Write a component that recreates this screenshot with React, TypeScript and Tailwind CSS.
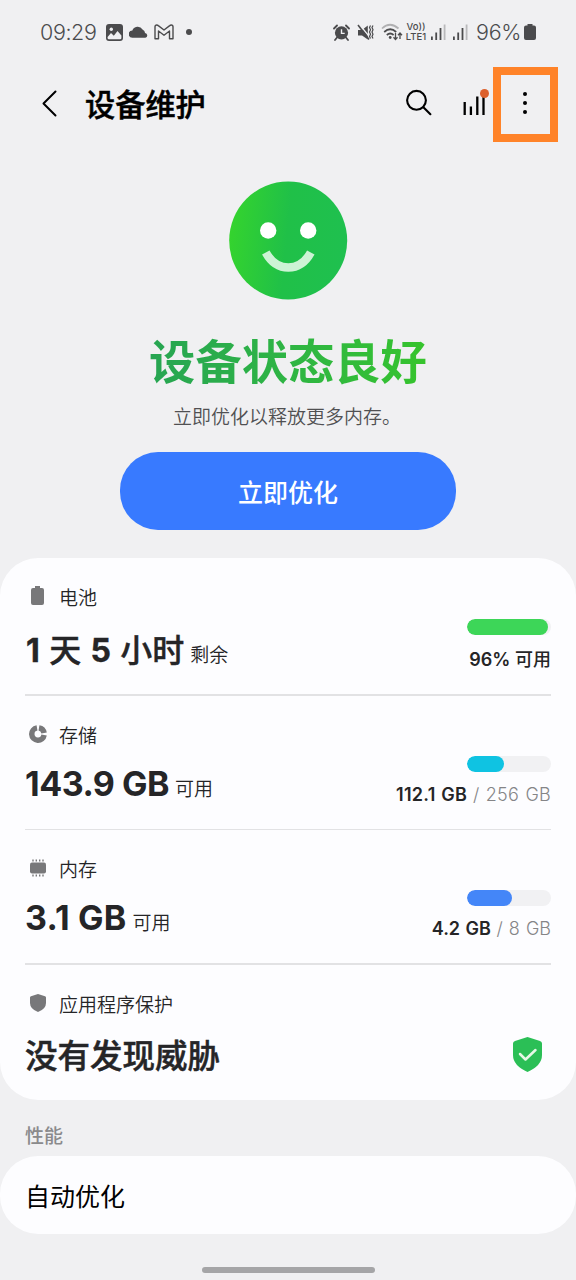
import type { ReactNode } from "react";

interface SectionProps {
  icon: ReactNode;
  label: string;
  value: ReactNode;
  valueClass?: string;
  suffix?: string;
  className: string;
  children?: ReactNode;
}

function SignalIcon() {
  return (
    <svg className="h-4 w-[15px]" viewBox="0 0 15 16" fill="#4b4b4d">
      <rect x="0" y="12.5" width="1.8" height="3.5" />
      <rect x="4.3" y="8.5" width="1.8" height="7.5" />
      <rect x="8.6" y="4" width="1.8" height="12" />
      <rect x="12.7" y="0.5" width="1.8" height="15.5" fill="#b9b9bb" />
    </svg>
  );
}

function StatusBar() {
  return (
    <div className="flex h-16 items-center pl-[40px] pr-[40px] text-[#4b4b4d]">
      <span className="w-[57px] whitespace-nowrap text-[21.5px] font-[350] leading-6 tracking-[-0.4px]">
        09:29
      </span>
      <svg className="ml-[9px] h-[17px] w-[17px]" viewBox="0 0 17 17">
        <rect width="17" height="17" rx="3" fill="#4b4b4d" />
        <path d="M1.600 13 5 9l2.800 2.700L11.500 7l3.900 4.600V14q0 1.300-1.400 1.300H3q-1.400 0-1.400-1.300Z" fill="#f0f0f2" />
        <circle cx="5.3" cy="5.2" r="1.7" fill="#f0f0f2" />
      </svg>
      <svg className="ml-[6px] h-3 w-[19px]" viewBox="0 0 18 12" fill="#4b4b4d" preserveAspectRatio="none">
        <path d="M3.500 11.700a3.600 3.600 0 0 1-.3-7.200A5.200 5.200 0 0 1 12.800 3.400 4 4 0 0 1 15.200 7a2.400 2.400 0 0 1 .300 4.700Z" />
      </svg>
      <svg className="ml-[6px] h-4 w-5" viewBox="0 0 20 16" fill="none" stroke="#4b4b4d" strokeWidth="1.4" strokeLinejoin="round">
        <path d="M1 2.800Q1 1 2.800 1q.8 0 1.500.6L10 6l5.700-4.400Q16.400 1 17.200 1 19 1 19 2.800V14.800H15.500V7L10 11.200 4.500 7v7.800H1Z" />
      </svg>
      <span className="ml-[12px] h-[6px] w-[6px] rounded-full bg-[#4b4b4d]" />

      <div className="ml-auto flex items-center">
        {/* alarm */}
        <svg className="h-[17px] w-[17px]" viewBox="0 0 17 17">
          <circle cx="8.5" cy="8.8" r="6.6" fill="#4b4b4d" />
          <path d="m1 4.500 3-3M16 4.500l-3-3M4 13.500l-2 2.500M13 13.500l2 2.500" stroke="#4b4b4d" strokeWidth="1.8" fill="none" strokeLinecap="round" />
          <path d="M8.500 5.200v4.200h3.200" stroke="#f0f0f2" strokeWidth="1.4" fill="none" />
        </svg>
        {/* vibrate / mute */}
        <svg className="ml-[7px] h-[17px] w-[17px]" viewBox="0 0 17 17">
          <path d="M1 6h4l5.800-4.500v14L5 11.500H1Z" fill="#4b4b4d" />
          <path d="M2.500.5 13 13.500" stroke="#f0f0f2" strokeWidth="1.2" />
          <path d="m1 1 11 14.500" stroke="#4b4b4d" strokeWidth="1.6" />
          <path d="m13.500 1.500-1 2 1 2.200-1 2.300 1 2.200-1 2.300 1 2M16 1.500l-1 2 1 2.200L15 8l1 2.200-1 2.300 1 2" stroke="#4b4b4d" strokeWidth="1.2" fill="none" />
        </svg>
        {/* wifi */}
        <svg className="ml-[7px] h-[18px] w-[22px]" viewBox="0 0 22 18" fill="none">
          <path d="M1 5.500q8-7.500 16.500 0" stroke="#b0b0b2" strokeWidth="1.7" />
          <path d="M3.200 9q6-5.500 12 0" stroke="#4b4b4d" strokeWidth="1.7" />
          <path d="M5.800 12q3.400-3 6.800 0" stroke="#4b4b4d" strokeWidth="1.7" />
          <circle cx="9.2" cy="14.5" r="1.4" fill="#4b4b4d" />
          <path d="M14.500 10v6.500m-2-2.200 2 2.300 2-2.300M19 16v-6m-2 2.200L19 10l2 2.200" stroke="#4b4b4d" strokeWidth="1.3" />
        </svg>
        <div className="ml-[2px] flex w-[22px] flex-col items-center whitespace-nowrap text-[9.5px] font-medium leading-[10px]">
          <span>Vo))</span>
          <span>LTE1</span>
        </div>
        <div className="ml-[4px] flex gap-[7px]">
          <SignalIcon />
          <SignalIcon />
        </div>
        <span className="ml-[8px] w-[46px] whitespace-nowrap text-[21.5px] font-[350] leading-6 tracking-[-0.3px]">
          96%
        </span>
        <svg className="ml-[2px] h-4 w-3" viewBox="0 0 12 16" fill="#4b4b4d">
          <path d="M3.500 0h5v1.500H10q2 0 2 2V14q0 2-2 2H2q-2 0-2-2V3.500q0-2 2-2h1.500Z" />
        </svg>
      </div>
    </div>
  );
}

function Header() {
  return (
    <header className="flex h-[82px] items-start pl-[41px] pr-[18px] text-black">
      <svg className="mt-[26px] h-[27px] w-4" viewBox="0 0 16 27" fill="none" stroke="#000" strokeWidth="2" strokeLinecap="round" strokeLinejoin="round">
        <path d="M14.500 1.500 2.500 13.500l12 12" />
      </svg>
      <h1 className="ml-[28px] mt-[21px] text-[30.2px] font-medium leading-10 [-webkit-text-stroke:0.5px]">
        设备维护
      </h1>
      <svg className="ml-auto mt-[25px] h-[27px] w-[27px]" viewBox="0 0 27 27" fill="none" stroke="#000" strokeWidth="2.1" strokeLinecap="round">
        <circle cx="11.5" cy="11.3" r="9.4" />
        <path d="m18.400 18.200 7 7" />
      </svg>
      <div className="relative ml-[31px] mt-[31px]">
        <svg className="h-5 w-6" viewBox="0 0 24 20" stroke="#000" strokeWidth="2.3">
          <path d="M1.700 7v13M7.900 11.500V20M14.300 1.500V20M20.500 1v19" />
        </svg>
        <span className="absolute -top-[6px] left-[17px] h-[9px] w-[9px] rounded-full bg-[#dc602c]" />
      </div>
      <div className="ml-[6px] mt-[3px] flex h-[75px] w-[65px] flex-col items-center justify-center gap-[5px] border-8 border-[#ff8329] pb-[3px] pr-[1px]">
        <span className="h-1 w-1 rounded-full bg-black" />
        <span className="h-1 w-1 rounded-full bg-black" />
        <span className="h-1 w-1 rounded-full bg-black" />
      </div>
    </header>
  );
}

function Face() {
  return (
    <svg className="mt-[35px] h-[119px] w-[119px]" viewBox="0 0 119 119">
      <defs>
        <linearGradient id="face" x1="0" y1="0.3" x2="1" y2="0.4">
          <stop offset="0" stopColor="#35d42d" />
          <stop offset="0.5" stopColor="#20c048" />
          <stop offset="1" stopColor="#1fc04f" />
        </linearGradient>
      </defs>
      <circle cx="59.2" cy="59.5" r="59" fill="url(#face)" />
      <circle cx="39.2" cy="49.5" r="8.2" fill="#fff" />
      <circle cx="79.2" cy="49.5" r="8.2" fill="#fff" />
      <path d="M36.800 71.500q8.200 15 22.500 15t22.500-15" fill="none" stroke="#cdf3d5" strokeWidth="8.5" />
    </svg>
  );
}

function Section({ icon, label, value, valueClass = "", suffix, className, children }: SectionProps) {
  return (
    <section className={`flex justify-between ${className}`}>
      <div>
        <div className="flex h-6 items-start">
          <div className="flex h-[21px] w-[25px] items-center justify-center">{icon}</div>
          <span className="ml-[9px] mt-[1.5px] text-[19px] font-[350] leading-6 text-[#252527]">{label}</span>
        </div>
        <div className={`flex items-baseline gap-[6px] whitespace-nowrap leading-10 text-[#252527] ${valueClass}`}>
          <span>{value}</span>
          {suffix && (
            <span className="text-[19px] font-[350] tracking-normal text-[#252527] [-webkit-text-stroke:0]">
              {suffix}
            </span>
          )}
        </div>
      </div>
      {children}
    </section>
  );
}

interface UsageProps {
  percent: number;
  color: string;
  className?: string;
  children: ReactNode;
}

function Usage({ percent, color, className = "mt-[33px] gap-[11px]", children }: UsageProps) {
  return (
    <div className={`flex flex-col items-end ${className}`}>
      <div className="h-4 w-[84px] overflow-hidden rounded-full bg-[#f1f1f3]">
        <div className={`h-4 rounded-full ${color}`} style={{ width: `${percent}%` }} />
      </div>
      <div className="whitespace-nowrap text-[18px] font-semibold leading-6 text-[#252527]">
        {children}
      </div>
    </div>
  );
}

export default function App() {
  return (
    <div className="flex h-[1280px] w-[576px] flex-col overflow-hidden bg-[#f0f0f2] font-[Inter,'Noto_Sans_CJK_SC',sans-serif]">
      <StatusBar />
      <Header />

      <div className="flex h-[412px] flex-col items-center">
        <Face />
        <h2 className="mt-[32px] bg-linear-to-r from-[#27a552] to-[#36c42c] bg-clip-text text-[46.3px] font-bold leading-[60px] text-transparent">
          设备状态良好
        </h2>
        <p className="mr-[2px] mt-[14px] text-[19px] font-[350] leading-6 text-[#505052]">
          立即优化以释放更多内存。
        </p>
        <button className="mt-[22px] h-[78px] w-[336px] rounded-[38px] bg-[#387aff] pt-[4px] text-[25px] font-medium leading-8 text-white">
          立即优化
        </button>
      </div>

      <main className="h-[542px] rounded-[38px] bg-[#fdfdff] px-[25px]">
        <Section
          className="h-[138px] border-b-2 border-[#e2e2e4] pt-[27px]"
          label="电池"
          value={
            <>
              <b>1</b> 天 <b>5</b> 小时
            </>
          }
          valueClass="mt-[22px] pl-[1px] text-[32px] font-medium [-webkit-text-stroke:0.4px] [word-spacing:0.8px]"
          suffix="剩余"
          icon={
            <svg className="h-[19px] w-[13px]" viewBox="0 0 13 19" fill="#78787a">
              <path d="M4 0h5v2h2q2 0 2 2v13q0 2-2 2H2q-2 0-2-2V4q0-2 2-2h2Z" />
            </svg>
          }
        >
          <Usage percent={96} color="bg-[#3dd658]" className="mt-[34px] gap-[13px]">
            96% <span className="font-medium">可用</span>
          </Usage>
        </Section>
        <Section
          className="h-[134px] border-b border-[#e2e2e4] pt-[27px]"
          label="存储"
          value="143.9 GB"
          valueClass="mt-[17px] text-[34px] font-bold tracking-[-0.5px]"
          suffix="可用"
          icon={
            <svg className="h-[18px] w-[18px]" viewBox="0 0 18 18" fill="none" stroke="#78787a" strokeWidth="5.5">
              <path d="M8 2.900A6.200 6.200 0 1 0 15.100 10" />
              <path d="M10 2.900A6.200 6.200 0 0 1 15.100 8" />
            </svg>
          }
        >
          <Usage percent={44} color="bg-[#0fc3e2]">
            <span className="tracking-[0.25px] [word-spacing:1px]">
              112.1 GB <span className="font-[350] text-[#858587]">/ 256 GB</span>
            </span>
          </Usage>
        </Section>
        <Section
          className="h-[135px] border-b-2 border-[#e2e2e4] pt-[27px]"
          label="内存"
          value="3.1 GB"
          valueClass="mt-[17px] text-[34px] font-bold tracking-[0.2px]"
          suffix="可用"
          icon={
            <svg className="h-[18px] w-4" viewBox="0 0 16 18" fill="#78787a">
              <rect y="3.5" width="16" height="11" rx="2" />
              <path d="M3 .5v2M6.300.5v2M9.700.5v2M13 .5v2M3 15.500v2M6.300 15.500v2M9.700 15.500v2M13 15.500v2" stroke="#78787a" strokeWidth="1.4" />
            </svg>
          }
        >
          <Usage percent={53} color="bg-[#4486f8]">
            <span className="[word-spacing:1px]">
              4.2 GB <span className="font-[350] text-[#858587]">/ 8 GB</span>
            </span>
          </Usage>
        </Section>
        <Section
          className="h-[135px] pt-[27px]"
          label="应用程序保护"
          value="没有发现威胁"
          valueClass="mt-[21px] text-[32.5px] font-medium [-webkit-text-stroke:0.5px]"
          icon={
            <svg className="h-[18px] w-4" viewBox="0 0 16 18" fill="#78787a">
              <path d="m8 0 7 2.200q1 .3 1 1.300v5.500q0 6-8 9-8-3-8-9V3.500q0-1 1-1.300Z" />
            </svg>
          }
        >
          <svg className="mr-[9px] mt-[45px] h-[35px] w-[29px]" viewBox="0 0 29 35">
            <path d="m14.500 0 12.500 4q2 .6 2 2.500V18q0 10.500-14.500 17Q0 28.500 0 18V6.500Q0 4.600 2 4Z" fill="#2bbf56" />
            <path d="m7 17 5.500 5.500L22.500 13" fill="none" stroke="#e6f8e6" strokeWidth="2.5" strokeLinecap="round" strokeLinejoin="round" />
          </svg>
        </Section>
      </main>

      <h3 className="h-14 pl-[25px] pt-[25px] text-[19px] font-medium leading-6 text-[#8a8a8c]">性能</h3>
      <div className="flex h-[78px] items-center rounded-[38px] bg-[#fdfdff] pl-[25px] pt-[4px] text-[25px] leading-8 text-black">
        自动优化
      </div>
      <div className="mx-auto mt-[33px] h-[6px] w-[173px] rounded-full bg-[#a5a5a7]" />
    </div>
  );
}
